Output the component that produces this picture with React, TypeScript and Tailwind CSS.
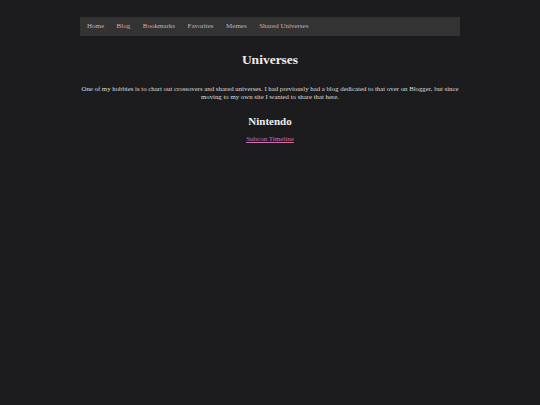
export default function App() {
  const links = ['Home', 'Blog', 'Bookmarks', 'Favorites', 'Memes', 'Shared Universes'];
  return (
    <div className="min-h-[405px] bg-[#1c1c1e] pt-[17px] font-['Liberation_Serif',serif]">
      <div className="mx-auto w-[380px]">
        <nav className="flex h-[19px] items-center bg-[#333333] px-[7px] text-[7px] text-[#c9aebb]">
          {links.map((l) => (
            <a key={l} className="mr-[12.5px]">{l}</a>
          ))}
        </nav>
        <h1 className="mt-[14px] text-center text-[13.5px] font-bold text-[#eeeeee]">Universes</h1>
        <p className="mx-[-2px] mt-[15px] text-center text-[6.8px] leading-[8px] text-[#dddddd]">
          One of my hobbies is to chart out crossovers and shared universes. I had previously had a blog dedicated to that over on Blogger, but since moving to my own site I wanted to share that here.
        </p>
        <h2 className="mt-[12px] text-center text-[11px] font-bold text-[#eeeeee]">Nintendo</h2>
        <div className="mt-[4px] text-center text-[7px]">
          <a className="text-[#d070b0] underline">Subcon Timeline</a>
        </div>
      </div>
    </div>
  );
}
